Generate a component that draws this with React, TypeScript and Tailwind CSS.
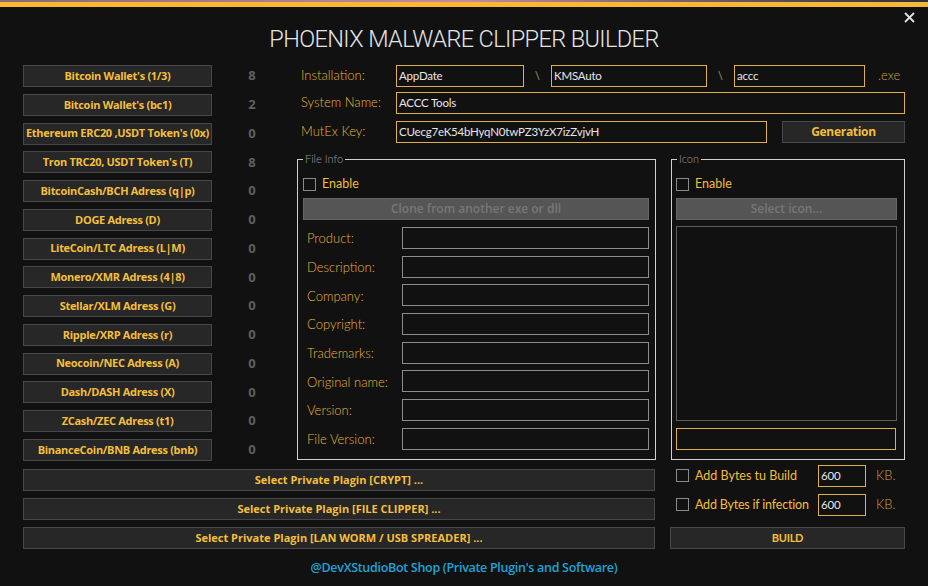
import React from 'react'

const coins: [string, string][] = [
  ["Bitcoin Wallet's (1/3)", '8'],
  ["Bitcoin Wallet's (bc1)", '2'],
  ["Ethereum ERC20 ,USDT Token's (0x)", '0'],
  ["Tron TRC20, USDT Token's (T)", '8'],
  ['BitcoinCash/BCH Adress (q|p)', '0'],
  ['DOGE Adress (D)', '0'],
  ['LiteCoin/LTC Adress (L|M)', '0'],
  ['Monero/XMR Adress (4|8)', '0'],
  ['Stellar/XLM Adress (G)', '0'],
  ['Ripple/XRP Adress (r)', '0'],
  ['Neocoin/NEC Adress (A)', '0'],
  ['Dash/DASH Adress (X)', '0'],
  ['ZCash/ZEC Adress (t1)', '0'],
  ['BinanceCoin/BNB Adress (bnb)', '0'],
]

const fileFields = ['Product:', 'Description:', 'Company:', 'Copyright:', 'Trademarks:', 'Original name:', 'Version:', 'File Version:']

const plugins = [
  'Select Private Plagin [CRYPT] ...',
  'Select Private Plagin [FILE CLIPPER] ...',
  'Select Private Plagin [LAN WORM / USB SPREADER] ...',
]

const lato = { fontFamily: 'Lato, "Open Sans", sans-serif' }

const DarkButton = ({ children, className = '' }: { children: React.ReactNode; className?: string }) => (
  <div className={`h-[22px] flex items-center justify-center bg-[#272727] border border-[#474747] text-[#f4bf3a] font-bold text-[11px] tracking-[-0.3px] whitespace-nowrap ${className}`}>
    {children}
  </div>
)

const Field = ({ value = '', className = '' }: { value?: string; className?: string }) => (
  <div className={`h-[22px] border border-[#e0b04a] flex items-center pl-[2px] text-[11.5px] tracking-[-0.2px] text-[#e6e6e6] ${className}`} style={lato}>
    {value}
  </div>
)

const Label = ({ children, className = '' }: { children: React.ReactNode; className?: string }) => (
  <div className={`w-[99px] pl-[4px] text-[13px] text-[#e4b23a] font-light ${className}`} style={lato}>{children}</div>
)

const Check = () => <div className="w-[13px] h-[13px] border border-[#8a8a8a] shrink-0" />

const App = () => {
  return (
    <div className="w-[928px] h-[586px] bg-[#111111] relative overflow-hidden" style={{ fontFamily: '"Open Sans", "Noto Sans", sans-serif' }}>
      <div className="h-[2px] bg-gradient-to-r from-[#8a6b70] via-[#c58aa0] to-[#2a3140]" />
      <div className="h-[5px] bg-[#f8b833]" />

      <div className="absolute right-[13px] top-[12px]">
        <svg width="11" height="11" viewBox="0 0 11 11">
          <path d="M1 1 L10 10 M10 1 L1 10" stroke="#e2e2e2" strokeWidth="1.8" />
        </svg>
      </div>

      <div className="h-[58px] flex items-center justify-center pt-[8px]">
        <h1 className="text-[23.5px] tracking-[-0.6px] text-[#e4e4e4] font-light" style={{ fontFamily: 'Roboto, "Open Sans", sans-serif' }}>
          PHOENIX MALWARE CLIPPER BUILDER
        </h1>
      </div>

      <div className="px-[23px]">
        <div className="flex">
          <div className="w-[274px] flex flex-col gap-[6.77px]">
            {coins.map(([name, n]) => (
              <div key={name} className="flex items-center">
                <DarkButton className="w-[189px]">{name}</DarkButton>
                <div className="w-[80px] text-center text-[13px] font-bold text-[#5f5f5f]">{n}</div>
              </div>
            ))}
          </div>

          <div className="w-[608px] text-[13px]">
            <div className="flex items-center h-[22px]">
              <Label>Installation:</Label>
              <Field value="AppDate" className="w-[128px]" />
              <div className="w-[27px] text-center text-[#8a7a50]">\</div>
              <Field value="KMSAuto" className="w-[156px]" />
              <div className="w-[27px] text-center text-[#8a7a50]">\</div>
              <Field value="accc" className="w-[131px]" />
              <div className="ml-[13px] text-[#c9a043] font-light" style={lato}>.exe</div>
            </div>
            <div className="flex items-center h-[22px] mt-[5px]">
              <Label>System Name:</Label>
              <Field value="ACCC Tools" className="flex-1" />
            </div>
            <div className="flex items-center h-[22px] mt-[7px]">
              <Label>MutEx Key:</Label>
              <Field value="CUecg7eK54bHyqN0twPZ3YzX7izZvjvH" className="w-[371px]" />
              <DarkButton className="ml-[15px] flex-1 text-[12px]">Generation</DarkButton>
            </div>

            <div className="flex mt-[16px] gap-[15px]">
              <div className="relative w-[359px] h-[301px] border border-[#d0d0d0] pt-[18px] pl-[5px] pr-[6px]">
                <span className="absolute -top-[9px] left-[5px] px-[2px] bg-[#111111] text-[11px] text-[#9a9a9a] font-light" style={lato}>File Info</span>
                <div className="flex items-center h-[13px] gap-[6px]">
                  <Check />
                  <span className="text-[12.5px] text-[#f2bd3a]" style={lato}>Enable</span>
                </div>
                <div className="mt-[7px] h-[22px] bg-[#555555] border border-[#666666] flex items-center justify-center text-[12px] text-[#777777] font-semibold">
                  Clone from another exe or dll
                </div>
                <div className="mt-[7px] flex flex-col gap-[6.7px]">
                  {fileFields.map((f) => (
                    <div key={f} className="flex items-center h-[22px]">
                      <Label className="pt-[2px]">{f}</Label>
                      <div className="flex-1 h-[22px] border border-[#8c8c8c]" />
                    </div>
                  ))}
                </div>
              </div>

              <div className="relative w-[234px] h-[301px] border border-[#d0d0d0] pt-[18px] pl-[4px] pr-[7px]">
                <span className="absolute -top-[9px] left-[5px] px-[2px] bg-[#111111] text-[11px] text-[#9a9a9a] font-light" style={lato}>Icon</span>
                <div className="flex items-center h-[13px] gap-[6px]">
                  <Check />
                  <span className="text-[12.5px] text-[#f2bd3a]" style={lato}>Enable</span>
                </div>
                <div className="mt-[7px] h-[22px] bg-[#555555] border border-[#666666] flex items-center justify-center text-[12px] text-[#777777] font-semibold">
                  Select icon...
                </div>
                <div className="mt-[6px] h-[195px] border border-[#5e5e5e]" />
                <div className="mt-[7px] h-[22px] border border-[#e0b04a] mr-[1px]" />
              </div>
            </div>
          </div>
        </div>

        <div className="flex mt-[4px]">
          <div className="w-[632px] pt-[4px] flex flex-col gap-[7px]">
            {plugins.map((p) => (
              <DarkButton key={p} className="w-full tracking-normal">{p}</DarkButton>
            ))}
          </div>
          <div className="ml-[15px] w-[235px] text-[13px]" style={lato}>
            <div className="flex items-center h-[22px]">
              <div className="ml-[6px]"><Check /></div>
              <div className="ml-[6px] w-[123px] text-[12.5px] text-[#f2bd3a] whitespace-nowrap">Add Bytes tu Build</div>
              <Field value="600" className="w-[48px] text-[#cfd6e0]" />
              <div className="ml-[10px] text-[#c9a043] font-light">KB.</div>
            </div>
            <div className="flex items-center h-[22px] mt-[7px]">
              <div className="ml-[6px]"><Check /></div>
              <div className="ml-[6px] w-[123px] text-[12.5px] tracking-[-0.2px] text-[#f2bd3a] whitespace-nowrap">Add Bytes if infection</div>
              <Field value="600" className="w-[48px] text-[#cfd6e0]" />
              <div className="ml-[10px] text-[#c9a043] font-light">KB.</div>
            </div>
            <DarkButton className="mt-[11px] w-full">BUILD</DarkButton>
          </div>
        </div>

        <div className="h-[38px] flex items-center justify-center">
          <span className="text-[12.5px] font-semibold text-[#1ea3d8] tracking-[-0.3px]">@DevXStudioBot Shop (Private Plugin's and Software)</span>
        </div>
      </div>
    </div>
  )
}

export default App
